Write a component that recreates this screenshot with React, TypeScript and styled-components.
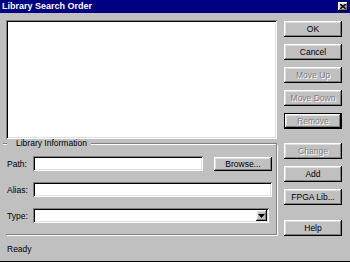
import * as React from 'react';
import styled, { createGlobalStyle } from 'styled-components';

const GlobalStyle = createGlobalStyle`
  html, body {
    margin: 0;
    padding: 0;
    background: #c0c0c0;
  }
  body {
    font-family: "Liberation Sans", Arial, sans-serif;
    font-size: 8.5px;
  }
`;

const raised = `
  box-shadow: inset -1px -1px #000, inset 1px 1px #fff,
    inset -2px -2px #808080, inset 2px 2px #dfdfdf;
`;

const sunken = `
  box-shadow: inset 1px 1px #808080, inset -1px -1px #fff,
    inset 2px 2px #000, inset -2px -2px #dfdfdf;
`;

function App() {
  return (
    <>
      <GlobalStyle />
      <Window>
        <TitleBar>
          <Title>Library Search Order</Title>
          <CloseButton aria-label="Close">
            <svg width="6" height="5" viewBox="0 0 6 5">
              <path d="M0 0 L6 5 M6 0 L0 5" stroke="#000" strokeWidth="1.4" />
            </svg>
          </CloseButton>
        </TitleBar>
        <Body>
          <LeftColumn>
            <ListBox />
            <Group>
              <GroupHeader>
                <Dash />
                <GroupLabel>Library Information</GroupLabel>
                <Rule />
              </GroupHeader>
              <GroupContent>
                <Row>
                  <FieldLabel>Path:</FieldLabel>
                  <TextField $width={170} />
                  <Button $width={58} $height={14} $offset={11}>
                    Browse...
                  </Button>
                </Row>
                <Row>
                  <FieldLabel>Alias:</FieldLabel>
                  <TextField $width={239} />
                </Row>
                <Row>
                  <FieldLabel>Type:</FieldLabel>
                  <Select>
                    <ArrowButton>
                      <svg width="7" height="4" viewBox="0 0 7 4">
                        <path d="M0 0 H7 L3.5 4 Z" fill="#000" />
                      </svg>
                    </ArrowButton>
                  </Select>
                </Row>
              </GroupContent>
            </Group>
          </LeftColumn>
          <ButtonColumn>
            <Button $offset={1}>OK</Button>
            <Button $offset={7}>Cancel</Button>
            <Button $offset={7} disabled>
              Move Up
            </Button>
            <Button $offset={7} disabled>
              Move Down
            </Button>
            <Button $offset={7} $default disabled>
              Remove
            </Button>
            <Button $offset={14} disabled>
              Change
            </Button>
            <Button $offset={7}>Add</Button>
            <Button $offset={7}>FPGA Lib...</Button>
            <Button $offset={15}>Help</Button>
          </ButtonColumn>
        </Body>
        <StatusBar>Ready</StatusBar>
      </Window>
    </>
  );
}

const Window = styled.div`
  width: 350px;
  height: 262px;
  box-sizing: border-box;
  display: flex;
  flex-direction: column;
  background: #c0c0c0;
  border-bottom: 1px solid #000;
  overflow: hidden;
`;

const TitleBar = styled.div`
  height: 13px;
  flex: none;
  display: flex;
  align-items: center;
  justify-content: space-between;
  padding: 0 2px 0 2px;
  background: #000080;
`;

const Title = styled.span`
  color: #fff;
  font-weight: bold;
  font-size: 9px;
  line-height: 13px;
  white-space: nowrap;
`;

const CloseButton = styled.div`
  width: 10px;
  height: 9px;
  display: flex;
  align-items: center;
  justify-content: center;
  background: #c0c0c0;
  ${raised}
`;

const Body = styled.div`
  display: flex;
  gap: 7px;
  padding: 7px 8px 0 6px;
  flex: none;
`;

const LeftColumn = styled.div`
  width: 271px;
  display: flex;
  flex-direction: column;
`;

const ListBox = styled.div`
  height: 119px;
  background: #fff;
  ${sunken}
`;

const Group = styled.div`
  display: flex;
  flex-direction: column;
`;

const GroupHeader = styled.div`
  height: 9px;
  display: flex;
  align-items: center;
  gap: 3px;
  margin-left: -3px;
`;

const Dash = styled.div`
  width: 4px;
  height: 0;
  border-top: 1px solid #808080;
  border-bottom: 1px solid #fff;
`;

const GroupLabel = styled.span`
  color: #000;
  line-height: 9px;
  padding: 0 1px 0 6px;
  white-space: nowrap;
`;

const Rule = styled.div`
  flex: 1;
  height: 0;
  border-top: 1px solid #808080;
  border-bottom: 1px solid #fff;
`;

const GroupContent = styled.div`
  display: flex;
  flex-direction: column;
  gap: 11px;
  padding: 8px 3px 11px 1px;
  border-right: 1px solid #808080;
  border-bottom: 1px solid #808080;
  box-shadow: 1px 1px 0 #fff;
  margin-top: -4px;
  padding-top: 12px;
`;

const Row = styled.div`
  display: flex;
  align-items: center;
  height: 15px;
`;

const FieldLabel = styled.span`
  width: 26px;
  color: #000;
`;

const TextField = styled.div<{ $width: number }>`
  width: ${(p) => p.$width}px;
  height: 15px;
  background: #fff;
  ${sunken}
`;

const Select = styled.div`
  width: 236px;
  height: 15px;
  box-sizing: border-box;
  padding: 2px;
  display: flex;
  justify-content: flex-end;
  background: #fff;
  ${sunken}
`;

const ArrowButton = styled.div`
  width: 11px;
  height: 11px;
  display: flex;
  align-items: center;
  justify-content: center;
  background: #c0c0c0;
  ${raised}
`;

const ButtonColumn = styled.div`
  width: 58px;
  display: flex;
  flex-direction: column;
`;

const Button = styled.button<{
  $offset?: number;
  $width?: number;
  $height?: number;
  $default?: boolean;
}>`
  width: ${(p) => (p.$width ? `${p.$width}px` : '100%')};
  height: ${(p) => p.$height ?? 16}px;
  margin: 0;
  margin-top: ${(p) => (p.$width ? 0 : p.$offset ?? 0)}px;
  margin-left: ${(p) => (p.$width ? p.$offset ?? 0 : 0)}px;
  padding: 0;
  border: ${(p) => (p.$default ? '1px solid #000' : 'none')};
  flex: none;
  background: #c0c0c0;
  font-family: "Liberation Sans", Arial, sans-serif;
  font-size: 8.5px;
  color: #000;
  ${raised}

  &:disabled {
    color: #808080;
    text-shadow: 1px 1px #fff;
  }
`;

const StatusBar = styled.div`
  flex: 1;
  display: flex;
  align-items: center;
  padding-left: 7px;
  color: #000;
`;

export default App;
